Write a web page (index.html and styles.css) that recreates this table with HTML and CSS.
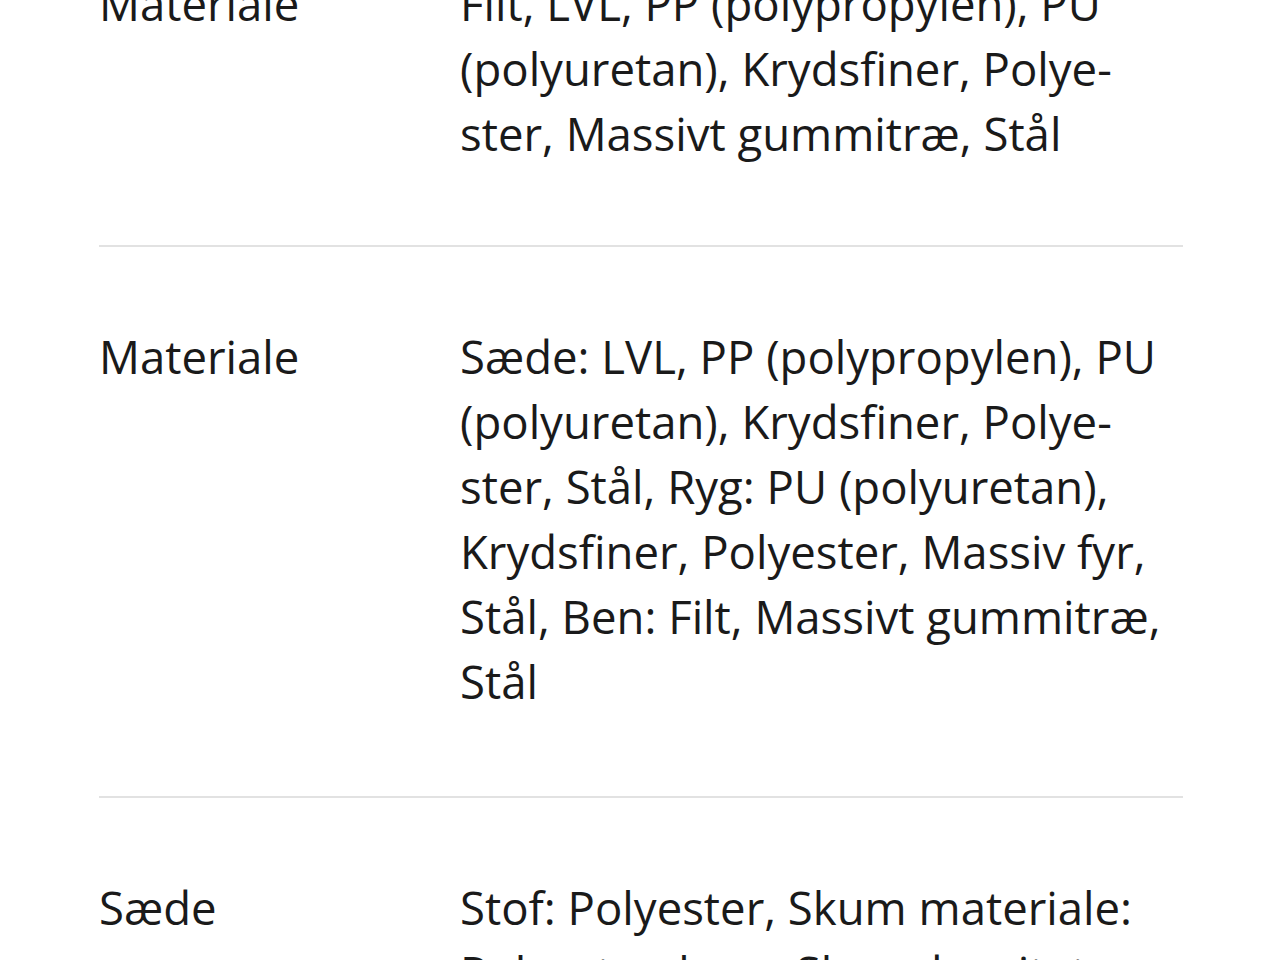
FILE: index.html
```html
<!DOCTYPE html>
<html lang="da">
<head>
<meta charset="utf-8">
<title>Materialer</title>
<link rel="stylesheet" href="styles.css">
</head>
<body>
<div class="specs">
  <div class="row">
    <div class="label">Materiale</div>
    <div class="value">Filt, LVL, PP (polypropylen), PU (polyuretan), Krydsfiner, Polye&shy;ster, Massivt gummitræ, Stål</div>
  </div>
  <div class="row">
    <div class="label">Materiale</div>
    <div class="value">Sæde: LVL, PP (polypropylen), PU (polyuretan), Krydsfiner, Polye&shy;ster, Stål, Ryg: PU (polyuretan), Krydsfiner, Polyester, Massiv fyr, Stål, Ben: Filt, Massivt gummitræ, Stål</div>
  </div>
  <div class="row">
    <div class="label">Sæde</div>
    <div class="value">Stof: Polyester, Skum materiale: Polyesterskum, Skumdensitet: 25&nbsp;kg/m³</div>
  </div>
</div>
</body>
</html>
```

FILE: styles.css
```css
html, body {
  margin: 0;
  padding: 0;
  background: #ffffff;
}
body {
  font-family: "Open Sans", "Noto Sans", sans-serif;
  font-size: 45.5px;
  line-height: 65px;
  color: #1a1a1a;
  overflow: hidden;
  height: 960px;
}
.specs {
  margin-top: -106px;
  padding: 0 97px 0 99px;
}
.row {
  display: grid;
  grid-template-columns: 361px 1fr;
  padding: 77px 0 82px;
  border-bottom: 2px solid #e2e2e2;
}
.row:first-child {
  padding-bottom: 79px;
}
.value {
  hyphens: manual;
}
```
